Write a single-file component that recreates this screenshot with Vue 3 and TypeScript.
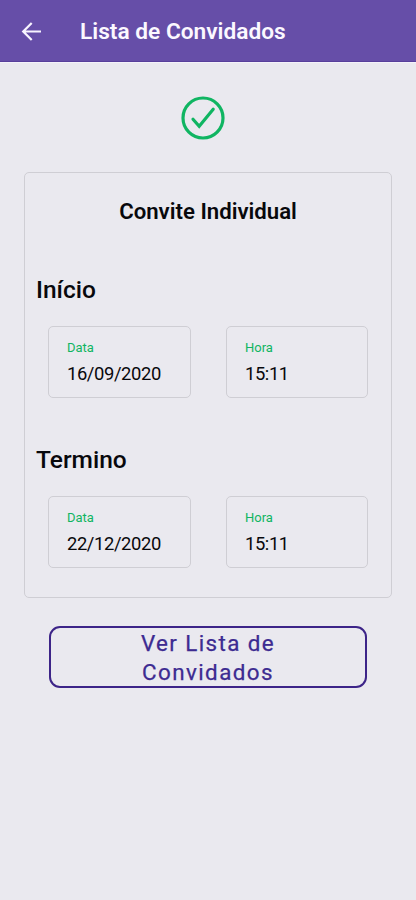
<script setup lang="ts">
interface Period {
  title: string
  date: string
  time: string
}

const periods: Period[] = [
  { title: 'Início', date: '16/09/2020', time: '15:11' },
  { title: 'Termino', date: '22/12/2020', time: '15:11' },
]
</script>

<template>
  <div class="screen">
    <header class="bar">
      <svg class="back" viewBox="0 0 28 28" width="28" height="28" fill="none" stroke="#f8f4ff" stroke-width="2.2">
        <path d="M24 14.5H6M14.7 6l-8.5 8.5 8.5 8.5" />
      </svg>
      <h1>Lista de Convidados</h1>
    </header>
    <svg class="check" viewBox="0 0 44 44" width="44" height="44" fill="none" stroke="#10b562" stroke-width="3.2" stroke-linecap="round">
      <circle cx="22" cy="22" r="20" />
      <path d="M12 23.2l6.2 7 14-17" />
    </svg>
    <main class="card">
      <h2>Convite Individual</h2>
      <section v-for="p in periods" :key="p.title">
        <h3>{{ p.title }}</h3>
        <div class="fields">
          <div class="field">
            <span class="label">Data</span>
            <span class="value">{{ p.date }}</span>
          </div>
          <div class="field">
            <span class="label">Hora</span>
            <span class="value">{{ p.time }}</span>
          </div>
        </div>
      </section>
    </main>
    <button class="action" type="button">Ver Lista de Convidados</button>
  </div>
</template>

<style>
body {
  background: #eae9ef;
}
</style>

<style scoped>
.screen {
  box-sizing: border-box;
  display: flex;
  flex-direction: column;
  min-height: 900px;
  background: #eae9ef;
  color: #08080c;
  font-family: Roboto, sans-serif;
}
h1, h2, h3 {
  margin: 0;
}
.bar {
  box-sizing: border-box;
  display: flex;
  align-items: center;
  height: 63px;
  padding-left: 17px;
  border-bottom: 1px solid #f4f2fa;
  background: #664ea8;
  background-clip: padding-box;
  box-shadow: inset 0 -1px #583f9b;
  color: #fbf8ff;
}
h1 {
  margin: 2px 0 0 35px;
  font-size: 22.7px;
  font-weight: 600;
  line-height: 26px;
}
.check {
  margin: 33px 0 0 181px;
}
.card {
  box-sizing: border-box;
  height: 426px;
  margin: 32px 24px 0;
  border: 1px solid #cfced4;
  border-radius: 5px;
}
h2 {
  padding-top: 25px;
  font-size: 22.2px;
  font-weight: 600;
  line-height: 26px;
  text-align: center;
}
section {
  height: 170px;
}
h2 + section {
  margin-top: 51px;
}
h3 {
  padding-left: 11px;
  font-size: 24.5px;
  font-weight: 500;
  line-height: 30px;
}
.fields {
  display: grid;
  grid-template-columns: 143px 142px;
  column-gap: 35px;
  padding: 21px 0 0 23px;
}
.field {
  box-sizing: border-box;
  display: flex;
  flex-direction: column;
  height: 72px;
  padding: 13px 0 0 18px;
  border: 1px solid #cfced4;
  border-radius: 5px;
}
.label {
  color: #10b562;
  font-size: 13px;
  line-height: 16px;
}
.value {
  margin-top: 6px;
  font-size: 18.4px;
  line-height: 23px;
  letter-spacing: -0.4px;
}
.action {
  box-sizing: border-box;
  width: 318px;
  height: 62px;
  margin: 28px 0 0 49px;
  padding: 1px 60px 0;
  border: 2px solid #3d2488;
  border-radius: 11px;
  background: transparent;
  color: #3d2b91;
  font: 400 22.4px/29px Roboto, sans-serif;
  letter-spacing: 1.4px;
  -webkit-text-stroke: 0.25px #3d2b91;
}
</style>
